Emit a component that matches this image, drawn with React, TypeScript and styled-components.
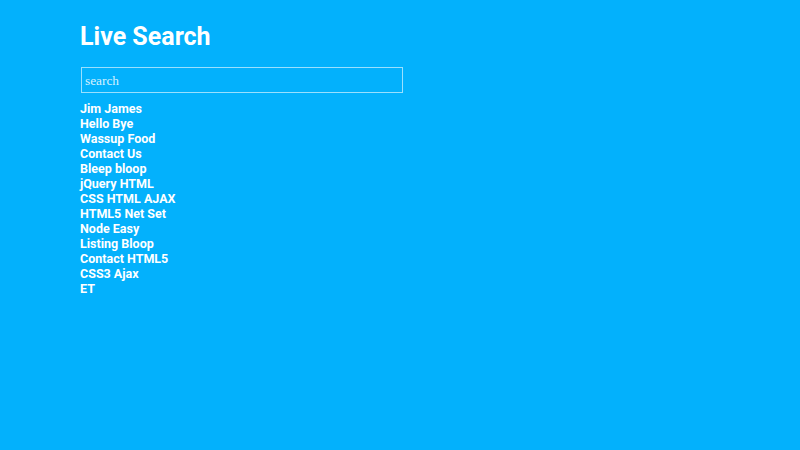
import styled, { createGlobalStyle } from "styled-components";

const GlobalStyle = createGlobalStyle`
  html, body {
    margin: 0;
    padding: 0;
    background: #03b1fc;
  }
`;

const Page = styled.div`
  min-height: 450px;
  padding: 22px 0 0 80px;
  box-sizing: border-box;
  font-family: Roboto, "Liberation Sans", sans-serif;
  color: #fff;
`;

const Title = styled.h1`
  margin: 0 0 16px 0;
  font-size: 25px;
  line-height: 29px;
  font-weight: 700;
`;

const SearchInput = styled.input`
  display: block;
  box-sizing: border-box;
  width: 322px;
  height: 26px;
  margin: 0 0 8px 1px;
  padding: 1px 3px 0;
  background: transparent;
  border: 1px solid rgba(255, 255, 255, 0.6);
  color: #fff;
  font-family: "Liberation Serif", serif;
  font-size: 13.33px;
  outline: none;

  &::placeholder {
    color: rgba(255, 255, 255, 0.85);
  }
`;

const Results = styled.ul`
  list-style: none;
  margin: 0;
  padding: 0;
`;

const Result = styled.li`
  font-size: 12.5px;
  line-height: 15px;
  font-weight: 700;
`;

const items = [
  "Jim James",
  "Hello Bye",
  "Wassup Food",
  "Contact Us",
  "Bleep bloop",
  "jQuery HTML",
  "CSS HTML AJAX",
  "HTML5 Net Set",
  "Node Easy",
  "Listing Bloop",
  "Contact HTML5",
  "CSS3 Ajax",
  "ET",
];

export default function App() {
  return (
    <>
      <GlobalStyle />
      <Page>
        <Title>Live Search</Title>
        <SearchInput type="text" placeholder="search" />
        <Results>
          {items.map((item) => (
            <Result key={item}>{item}</Result>
          ))}
        </Results>
      </Page>
    </>
  );
}
